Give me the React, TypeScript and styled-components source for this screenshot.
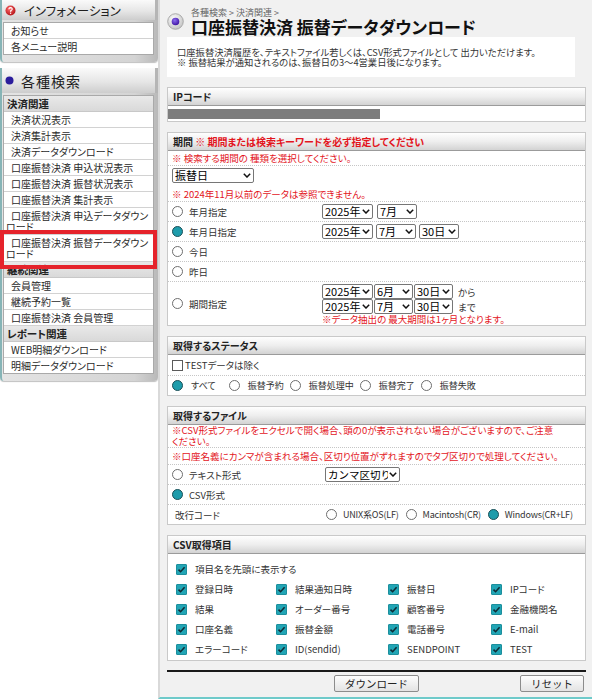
import React from 'react';
import styled, { createGlobalStyle } from 'styled-components';

const GlobalStyle = createGlobalStyle`
  html, body { margin: 0; padding: 0; background: #fff; }
  body {
    font-family: "Noto Sans CJK JP", "Noto Sans", sans-serif;
    font-feature-settings: "palt";
    color: #222;
  }
  * { box-sizing: border-box; }
`;

const Page = styled.div`
  display: flex;
  align-items: flex-start;
  width: 592px;
`;

/* ---------- sidebar ---------- */
const Sidebar = styled.aside`
  width: 158px;
  flex: none;
  display: flex;
  flex-direction: column;
  gap: 6px;
`;

const SideBlock = styled.section`
  background: linear-gradient(to right, #e4e4e4, #d4d4d4 85%, #b9b9b9);
  border-left: 2px solid #86b4b6;
  padding-bottom: 7px;
  border-radius: 0 0 4px 4px;
  box-shadow: 0 1px 1px rgba(0, 0, 0, 0.25);
`;

const SideHead = styled.div<{ $big?: boolean }>`
  height: ${p => (p.$big ? 25 : 20)}px;
  display: flex;
  align-items: center;
  gap: ${p => (p.$big ? 7 : 8)}px;
  padding-left: 3px;
  background: linear-gradient(#fafafa, #e6e6e6 55%, #cdcdcd);
  border-right: 3px solid #b5b5b5;
  font-size: ${p => (p.$big ? 14 : 12.5)}px;
  letter-spacing: ${p => (p.$big ? 1 : 0)}px;
  color: #1e1e1e;
`;

const SideList = styled.ul`
  list-style: none;
  margin: 2px 4px 0 1px;
  padding: 0;
  background: #fff;
  border: 1px solid #a9a9a9;
`;

const SideItem = styled.li<{ $mark?: boolean }>`
  position: relative;
  padding: 2px 3px 2px 2px;
  text-indent: 5px;
  font-size: 10px;
  line-height: 11px;
  color: #2a2a2a;
  border-bottom: 1px solid #d2d2d2;
  &:last-child { border-bottom: none; }
  ${p =>
    p.$mark &&
    `
    &::after {
      content: "";
      position: absolute;
      inset: -5px -4px -8px -4px;
      border: 4px solid #e5232b;
      z-index: 2;
    }
  `}
`;

const SideSub = styled.li`
  height: 16px;
  display: flex;
  align-items: center;
  padding-left: 3px;
  font-size: 10.5px;
  font-weight: bold;
  color: #222;
  background: linear-gradient(#e9e9e9, #d9d9d9);
  border-bottom: 1px solid #c8c8c8;
`;

/* ---------- main ---------- */
const Main = styled.main`
  flex: 1;
  min-width: 0;
  background: #f1f1f1;
  border-left: 2px solid #d9d9d9;
  border-bottom: 2px solid #6ecaca;
  padding: 8px 6px 5px 7px;
`;

const Header = styled.header`
  display: flex;
  align-items: center;
  gap: 7px;
  height: 27px;
`;

const TitleBlock = styled.div`
  display: flex;
  flex-direction: column;
`;

const Crumb = styled.div`
  font-size: 9px;
  line-height: 10px;
  color: #666;
`;

const Title = styled.h1`
  margin: 0;
  font-size: 17px;
  line-height: 17px;
  font-weight: bold;
  color: #111;
`;

const Lead = styled.div`
  margin-top: 2px;
  width: 408px;
  background: #fff;
  padding: 10px 10px;
  font-size: 9.3px;
  line-height: 10px;
  color: #333;
`;

const Box = styled.section`
  margin-top: 10px;
  background: #fff;
  border: 1px solid #c9c9c9;
`;

const BoxHead = styled.h2`
  margin: 0;
  height: 18px;
  display: flex;
  align-items: center;
  padding-left: 5px;
  font-size: 10px;
  font-weight: bold;
  color: #222;
  background: linear-gradient(#fefefe, #eeeeee 50%, #d3d3d3);
  border-bottom: 1px solid #9b9b9b;
`;

const Warn = styled.span<{ $bold?: boolean }>`
  color: #e3151d;
  font-weight: ${p => (p.$bold ? 'bold' : 'normal')};
`;

const Redacted = styled.div`
  margin: 2px 0 2px;
  width: 212px;
  height: 10px;
  background: #7d7d7d;
`;

const Row = styled.div<{ $min?: number; $pad?: string }>`
  display: grid;
  grid-template-columns: 150px 1fr;
  align-items: center;
  min-height: ${p => p.$min ?? 20}px;
  padding: ${p => p.$pad ?? '0 4px'};
  font-size: 9.5px;
  color: #333;
  & + & { border-top: 1px dotted #c6c6c6; }
`;

const FullRow = styled(Row)`
  display: flex;
  flex-direction: column;
  align-items: flex-start;
  justify-content: center;
`;

const NoteText = styled.div<{ $mt?: number }>`
  color: #e3151d;
  font-size: 9.5px;
  line-height: 11px;
  margin-top: ${p => p.$mt ?? 0}px;
`;

const Choice = styled.label<{ $fs?: number; $ls?: number; $gap?: number; $after?: number }>`
  display: inline-flex;
  align-items: center;
  gap: ${p => p.$gap ?? 6}px;
  white-space: nowrap;
  font-size: ${p => p.$fs ?? 9.5}px;
  letter-spacing: ${p => p.$ls ?? 0}px;
  margin-right: ${p => p.$after ?? 0}px;
`;

const Radio = styled.input.attrs({ type: 'radio' })`
  appearance: none;
  margin: 0;
  width: 11px;
  height: 11px;
  flex: none;
  border-radius: 50%;
  border: 1px solid #6e6e6e;
  background: #fff;
  &:checked {
    background: #1e9cab;
    border-color: #1b4f57;
  }
`;

const CheckBox = styled.span<{ $on?: boolean }>`
  display: inline-flex;
  align-items: center;
  justify-content: center;
  width: 11px;
  height: 11px;
  flex: none;
  border: 1px solid ${p => (p.$on ? '#1c8f9d' : '#5b5b5b')};
  background: ${p => (p.$on ? '#22a5b5' : '#fff')};
  border-radius: ${p => (p.$on ? 1 : 0)}px;
`;

const Selects = styled.div<{ $gap?: number; $indent?: number }>`
  display: flex;
  align-items: center;
  gap: ${p => p.$gap ?? 4}px;
  padding-left: ${p => p.$indent ?? 0}px;
`;

const Stack = styled.div`
  display: flex;
  flex-direction: column;
  padding: 2px 0 0;
`;

const SelectWrap = styled.span<{ $w: number }>`
  position: relative;
  display: inline-flex;
  flex: none;
  width: ${p => p.$w}px;
  height: 15px;
`;

const SelectBox = styled.select<{ $fs?: number }>`
  appearance: none;
  width: 100%;
  height: 100%;
  margin: 0;
  padding: 0 11px 0 2px;
  font-family: "Noto Sans CJK JP", sans-serif;
  font-size: ${p => p.$fs ?? 11}px;
  line-height: 13px;
  color: #000;
  background: #fff;
  border: 1px solid #767676;
  border-radius: 2px;
`;

const Chevron = styled.svg`
  position: absolute;
  right: 3px;
  top: 5px;
  pointer-events: none;
`;

const Suffix = styled.span`
  margin-left: 4px;
  font-size: 9.5px;
  color: #333;
`;

const InlineChoices = styled.div<{ $gap?: number; $indent?: number }>`
  display: flex;
  align-items: center;
  gap: ${p => p.$gap ?? 10}px;
  padding-left: ${p => p.$indent ?? 0}px;
`;

const Plain = styled.span`
  padding-left: 3px;
`;

const CsvBody = styled.div`
  padding: 5px 0 1px 8px;
  font-size: 9.5px;
  color: #333;
`;

const CsvGrid = styled.div`
  display: grid;
  grid-template-columns: 100px 112px 103px 1fr;
  grid-auto-rows: 20px;
  align-items: center;
`;

const CsvLine = styled.div`
  height: 20px;
  display: flex;
  align-items: center;
`;

const CsvChoice = styled.label`
  display: inline-flex;
  align-items: center;
  gap: 8px;
  white-space: nowrap;
`;

const Footer = styled.div`
  margin-top: 9px;
  border-top: 2px solid #1a1a1a;
  padding-top: 3px;
  display: grid;
  grid-template-columns: 1fr auto 1fr;
  align-items: center;
`;

const Button = styled.button<{ $end?: boolean }>`
  height: 17px;
  padding: 0 10px;
  font-family: "Noto Sans CJK JP", sans-serif;
  font-size: 10.5px;
  line-height: 15px;
  color: #222;
  background: linear-gradient(#fdfdfd, #e3e3e3);
  border: 1px solid #8c8c8c;
  border-radius: 2px;
  justify-self: ${p => (p.$end ? 'end' : 'auto')};
  margin-right: ${p => (p.$end ? 2 : 0)}px;
`;

/* ---------- icons ---------- */
const InfoBall = () => (
  <svg width="11" height="11" viewBox="0 0 11 11">
    <defs>
      <radialGradient id="rb" cx="0.4" cy="0.35" r="0.7">
        <stop offset="0" stopColor="#ff6a6a" />
        <stop offset="1" stopColor="#b10f14" />
      </radialGradient>
    </defs>
    <circle cx="5.5" cy="5.5" r="5" fill="url(#rb)" />
    <path d="M3.8 4.3 Q4 2.6 5.6 2.6 Q7.3 2.7 7.2 4.2 Q7.1 5.1 5.8 5.6 L5.6 6.8" stroke="#fff" strokeWidth="1.2" fill="none" />
    <circle cx="5.6" cy="8.3" r="0.7" fill="#fff" />
  </svg>
);

const BlueDot = () => (
  <svg width="9" height="9" viewBox="0 0 9 9">
    <circle cx="4.5" cy="4.5" r="4" fill="#2b1d9c" />
  </svg>
);

const TitleIcon = () => (
  <svg width="17" height="17" viewBox="0 0 17 17">
    <defs>
      <radialGradient id="tg" cx="0.4" cy="0.35" r="0.75">
        <stop offset="0" stopColor="#ffffff" />
        <stop offset="1" stopColor="#bdbdbd" />
      </radialGradient>
      <radialGradient id="pg" cx="0.4" cy="0.35" r="0.7">
        <stop offset="0" stopColor="#8d6cf0" />
        <stop offset="1" stopColor="#3a0f9e" />
      </radialGradient>
    </defs>
    <circle cx="8.5" cy="8.5" r="7.8" fill="url(#tg)" stroke="#9d9d9d" strokeWidth="0.8" />
    <circle cx="8.5" cy="8.5" r="3.8" fill="url(#pg)" />
  </svg>
);

const Tick = () => (
  <svg width="9" height="9" viewBox="0 0 9 9">
    <path d="M1.5 4.6 L3.6 6.7 L7.6 2.2" stroke="#0f2c36" strokeWidth="1.6" fill="none" />
  </svg>
);

const Check: React.FC<{ on?: boolean }> = ({ on }) => <CheckBox $on={on}>{on && <Tick />}</CheckBox>;

const Sel: React.FC<{ v: string; w: number; fs?: number }> = ({ v, w, fs }) => (
  <SelectWrap $w={w}>
    <SelectBox defaultValue={v} $fs={fs}>
      <option>{v}</option>
    </SelectBox>
    <Chevron width="8" height="5" viewBox="0 0 8 5">
      <path d="M0.8 0.8 L4 4 L7.2 0.8" stroke="#111" strokeWidth="1.5" fill="none" />
    </Chevron>
  </SelectWrap>
);

/* ---------- data ---------- */
type Side = { t: string; sub?: boolean; mark?: boolean };
const searchMenu: Side[] = [
  { t: '決済関連', sub: true },
  { t: '決済状況表示' },
  { t: '決済集計表示' },
  { t: '決済データダウンロード' },
  { t: '口座振替決済 申込状況表示' },
  { t: '口座振替決済 振替状況表示' },
  { t: '口座振替決済 集計表示' },
  { t: '口座振替決済 申込データダウンロード' },
  { t: '口座振替決済 振替データダウンロード', mark: true },
  { t: '継続関連', sub: true },
  { t: '会員管理' },
  { t: '継続予約一覧' },
  { t: '口座振替決済 会員管理' },
  { t: 'レポート関連', sub: true },
  { t: 'WEB明細ダウンロード' },
  { t: '明細データダウンロード' },
];

const csvItems = [
  '登録日時', '結果通知日時', '振替日', 'IPコード',
  '結果', 'オーダー番号', '顧客番号', '金融機関名',
  '口座名義', '振替金額', '電話番号', 'E-mail',
  'エラーコード', 'ID(sendid)', 'SENDPOINT', 'TEST',
];

export default function App() {
  return (
    <>
      <GlobalStyle />
      <Page>
        <Sidebar>
          <SideBlock>
            <SideHead>
              <InfoBall />
              インフォメーション
            </SideHead>
            <SideList>
              <SideItem>お知らせ</SideItem>
              <SideItem>各メニュー説明</SideItem>
            </SideList>
          </SideBlock>
          <SideBlock>
            <SideHead $big>
              <BlueDot />
              各種検索
            </SideHead>
            <SideList>
              {searchMenu.map(m =>
                m.sub ? (
                  <SideSub key={m.t}>{m.t}</SideSub>
                ) : (
                  <SideItem key={m.t} $mark={m.mark}>{m.t}</SideItem>
                )
              )}
            </SideList>
          </SideBlock>
        </Sidebar>

        <Main>
          <Header>
            <TitleIcon />
            <TitleBlock>
              <Crumb>各種検索 &gt; 決済関連 &gt;</Crumb>
              <Title>口座振替決済 振替データダウンロード</Title>
            </TitleBlock>
          </Header>
          <Lead>
            口座振替決済履歴を、テキストファイル若しくは、CSV形式ファイルとして 出力いただけます。
            <br />※ 振替結果が通知されるのは、振替日の3～4営業日後になります。
          </Lead>

          <Box>
            <BoxHead>IPコード</BoxHead>
            <FullRow $min={15} $pad="0">
              <Redacted />
            </FullRow>
          </Box>

          <Box>
            <BoxHead>
              期間&nbsp;<Warn $bold>※ 期間または検索キーワードを必ず指定してください</Warn>
            </BoxHead>
            <FullRow $min={14}>
              <NoteText>※ 検索する期間の 種類を選択してください。</NoteText>
            </FullRow>
            <FullRow $min={36} $pad="2px 4px 1px">
              <Sel v="振替日" w={82} />
              <NoteText $mt={6}>※ 2024年11月以前のデータは参照できません。</NoteText>
            </FullRow>
            <Row>
              <Choice><Radio name="p" />年月指定</Choice>
              <Selects><Sel v="2025年" w={51} /><Sel v="7月" w={40} /></Selects>
            </Row>
            <Row>
              <Choice><Radio name="p" defaultChecked />年月日指定</Choice>
              <Selects $gap={3}><Sel v="2025年" w={51} /><Sel v="7月" w={40} /><Sel v="30日" w={40} /></Selects>
            </Row>
            <Row>
              <Choice><Radio name="p" />今日</Choice>
            </Row>
            <Row>
              <Choice><Radio name="p" />昨日</Choice>
            </Row>
            <Row>
              <Choice><Radio name="p" />期間指定</Choice>
              <Stack>
                <Selects $gap={1}><Sel v="2025年" w={51} /><Sel v="6月" w={39} /><Sel v="30日" w={39} /><Suffix>から</Suffix></Selects>
                <Selects $gap={1}><Sel v="2025年" w={51} /><Sel v="7月" w={39} /><Sel v="30日" w={39} /><Suffix>まで</Suffix></Selects>
                <NoteText>※データ抽出の 最大期間は1ヶ月となります。</NoteText>
              </Stack>
            </Row>
          </Box>

          <Box>
            <BoxHead>取得するステータス</BoxHead>
            <FullRow $min={20}>
              <Choice $gap={2}><Check />TESTデータは除く</Choice>
            </FullRow>
            <FullRow>
              <InlineChoices $gap={6}>
                <Choice $fs={9} $gap={8} $after={7}><Radio name="s" defaultChecked />すべて</Choice>
                <Choice $fs={9} $gap={8}><Radio name="s" />振替予約</Choice>
                <Choice $fs={9} $gap={8}><Radio name="s" />振替処理中</Choice>
                <Choice $fs={9} $gap={8}><Radio name="s" />振替完了</Choice>
                <Choice $fs={9} $gap={8}><Radio name="s" />振替失敗</Choice>
              </InlineChoices>
            </FullRow>
          </Box>

          <Box>
            <BoxHead>取得するファイル</BoxHead>
            <FullRow $min={22} $pad="0 4px">
              <NoteText>
                ※CSV形式ファイルをエクセルで開く場合、頭の0が表示されない場合がございますので、ご注意
                <br />ください。
              </NoteText>
            </FullRow>
            <FullRow $min={17}>
              <NoteText>※口座名義にカンマが含まれる場合、区切り位置がずれますのでタブ区切りで処理してください。</NoteText>
            </FullRow>
            <Row>
              <Choice><Radio name="f" />テキスト形式</Choice>
              <Selects $indent={3}>
                <Sel v="カンマ区切り" w={75} fs={10.5} />
              </Selects>
            </Row>
            <Row>
              <Choice><Radio name="f" defaultChecked />CSV形式</Choice>
            </Row>
            <Row>
              <Plain>改行コード</Plain>
              <InlineChoices $gap={7} $indent={4}>
                <Choice $fs={9} $ls={-0.2}><Radio name="n" />UNIX系OS(LF)</Choice>
                <Choice $fs={9} $ls={-0.2}><Radio name="n" />Macintosh(CR)</Choice>
                <Choice $fs={9} $ls={-0.2}><Radio name="n" defaultChecked />Windows(CR+LF)</Choice>
              </InlineChoices>
            </Row>
          </Box>

          <Box>
            <BoxHead>CSV取得項目</BoxHead>
            <CsvBody>
              <CsvLine>
                <CsvChoice><Check on />項目名を先頭に表示する</CsvChoice>
              </CsvLine>
              <CsvGrid>
                {csvItems.map(t => (
                  <CsvChoice key={t}><Check on />{t}</CsvChoice>
                ))}
              </CsvGrid>
            </CsvBody>
          </Box>

          <Footer>
            <span />
            <Button>ダウンロード</Button>
            <Button $end>リセット</Button>
          </Footer>
        </Main>
      </Page>
    </>
  );
}
